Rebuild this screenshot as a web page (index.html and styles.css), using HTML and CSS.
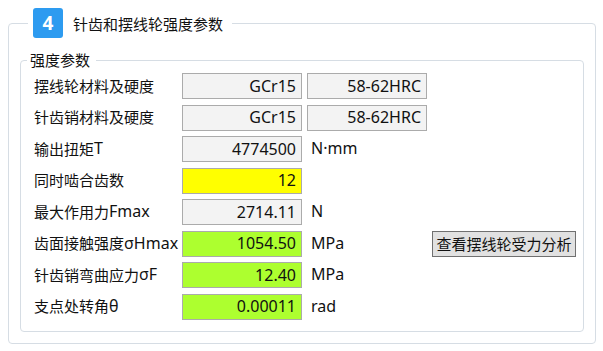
FILE: index.html
```html
<!DOCTYPE html>
<html lang="zh-CN">

<head>
    <meta charset="UTF-8">
    <meta name="viewport" content="width=device-width, initial-scale=1.0">
    <title>针齿和摆线轮强度参数</title>
    <link rel="stylesheet" href="styles.css">
</head>

<body>
    <fieldset class="section">
        <legend class="section-title">
            <span class="badge">4</span>
            <span class="title-text">针齿和摆线轮强度参数</span>
        </legend>

        <fieldset class="group">
            <legend class="group-title">强度参数</legend>
            <div class="grid">
                <div class="label">摆线轮材料及硬度</div>
                <div class="field">GCr15</div>
                <div class="field">58-62HRC</div>
                <div></div>

                <div class="label">针齿销材料及硬度</div>
                <div class="field">GCr15</div>
                <div class="field">58-62HRC</div>
                <div></div>

                <div class="label">输出扭矩<span class="latin">T</span></div>
                <div class="field">4774500</div>
                <div class="unit">N·mm</div>
                <div></div>

                <div class="label">同时啮合齿数</div>
                <div class="field yellow">12</div>
                <div></div>
                <div></div>

                <div class="label">最大作用力<span class="latin">Fmax</span></div>
                <div class="field">2714.11</div>
                <div class="unit">N</div>
                <div></div>

                <div class="label">齿面接触强度<span class="latin">σHmax</span></div>
                <div class="field green">1054.50</div>
                <div class="unit">MPa</div>
                <button class="btn">查看摆线轮受力分析</button>

                <div class="label">针齿销弯曲应力<span class="latin">σF</span></div>
                <div class="field green">12.40</div>
                <div class="unit">MPa</div>
                <div></div>

                <div class="label">支点处转角<span class="latin">θ</span></div>
                <div class="field green">0.00011</div>
                <div class="unit">rad</div>
                <div></div>
            </div>
        </fieldset>
    </fieldset>
</body>

</html>
```

FILE: styles.css
```css
body {
    margin: 0;
    background: #fff;
    font-family: "Noto Sans", "Noto Sans CJK SC", sans-serif;
    font-size: 15px;
    color: #111;
}

.section {
    box-sizing: border-box;
    width: 588px;
    margin: 8px 0 0 8px;
    padding: 0 11px 11px 11px;
    border: 1px solid #d6dde4;
    border-radius: 4px;
    min-width: 0;
}

.section-title {
    display: flex;
    align-items: center;
    margin-left: 8px;
    padding: 0 9px 0 5px;
    height: 30px;
}

.badge {
    display: flex;
    align-items: center;
    justify-content: center;
    width: 30px;
    height: 30px;
    border-radius: 3px;
    background: #2d9bf0;
    color: #fff;
    font-weight: bold;
    font-size: 19px;
}

.title-text {
    margin: 2px 0 0 10px;
    font-family: "Noto Sans CJK SC", sans-serif;
    line-height: 20px;
}

.group {
    box-sizing: border-box;
    margin: 12px 0 0 0;
    padding: 0 0 11px 0;
    border: 1px solid #d6dde4;
    border-radius: 4px;
    min-width: 0;
}

.group-title {
    margin-left: 6px;
    padding: 0 6px 0 3px;
    line-height: 20px;
    font-family: "Noto Sans CJK SC", sans-serif;
}

.grid {
    display: grid;
    grid-template-columns: 143px 120px 120px 144px;
    grid-auto-rows: 26px;
    column-gap: 5px;
    row-gap: 5.5px;
    margin: 3px 0 0 13px;
}

.label {
    display: flex;
    align-items: center;
    white-space: nowrap;
    padding-bottom: 2px;
}

.latin {
    font-size: 16px;
}

.field {
    box-sizing: border-box;
    display: flex;
    align-items: center;
    justify-content: flex-end;
    padding: 0 5px 1px 0;
    border: 1px solid #ababab;
    background: #f3f3f3;
    font-size: 16px;
}

.yellow {
    background: #ffff00;
}

.green {
    background: #adff2f;
}

.unit {
    display: flex;
    align-items: center;
    padding: 0 0 2px 4px;
    font-size: 16px;
}

.btn {
    box-sizing: border-box;
    margin: 0;
    padding: 0 0 1px 0;
    border: 1px solid #707070;
    background: #e1e1e1;
    font-family: "Noto Sans CJK SC", sans-serif;
    font-size: 15px;
    color: #111;
}
```
